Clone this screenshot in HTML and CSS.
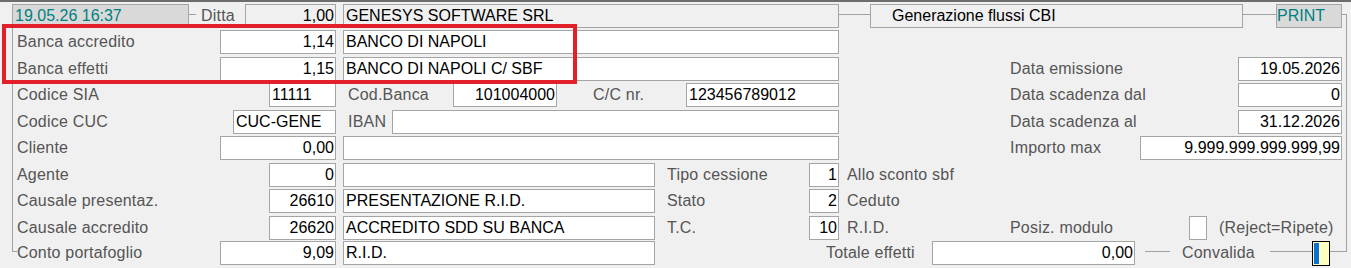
FILE: index.html
```html
<!DOCTYPE html>
<html lang="it">
<head>
<meta charset="utf-8">
<title>Generazione flussi CBI</title>
<link rel="stylesheet" href="styles.css">
</head>
<body>
<div class="screen">
  <div class="form">
    <div class="frame-left"></div>
    <div class="frame-right"></div>

    <div class="row r1">
      <div class="f stamp c-stamp">19.05.26 16:37</div>
      <div class="ditta c-ditta"><span class="wire w7"></span><span class="l">Ditta</span></div>
      <div class="f ro r c-dit">1,00</div>
      <div class="f ro c-long">GENESYS SOFTWARE SRL</div>
      <div class="wire c-link1"></div>
      <div class="f ro title c-title">Generazione flussi CBI</div>
      <div class="wire c-link2"></div>
      <div class="f print c-print">PRINT</div>
    </div>

    <div class="row r2">
      <div class="l c-lbl">Banca accredito</div>
      <div class="f r c-numw">1,14</div>
      <div class="f c-long">BANCO DI NAPOLI</div>
    </div>

    <div class="row r3">
      <div class="l c-lbl">Banca effetti</div>
      <div class="f r c-numw">1,15</div>
      <div class="f c-long">BANCO DI NAPOLI C/ SBF</div>
      <div class="l c-rlbl">Data emissione</div>
      <div class="f r c-date">19.05.2026</div>
    </div>

    <div class="row r4">
      <div class="l c-lbl">Codice SIA</div>
      <div class="f c-numn">11111</div>
      <div class="l c-mlbl">Cod.Banca</div>
      <div class="f r c-cb">101004000</div>
      <div class="l c-cclbl">C/C nr.</div>
      <div class="f c-cc">123456789012</div>
      <div class="l c-rlbl">Data scadenza dal</div>
      <div class="f r c-date">0</div>
    </div>

    <div class="row r5">
      <div class="l c-lbl">Codice CUC</div>
      <div class="f c-cuc">CUC-GENE</div>
      <div class="l c-mlbl">IBAN</div>
      <div class="f c-iban"></div>
      <div class="l c-rlbl">Data scadenza al</div>
      <div class="f r c-date">31.12.2026</div>
    </div>

    <div class="row r6">
      <div class="l c-lbl">Cliente</div>
      <div class="f r c-numw">0,00</div>
      <div class="f c-long"></div>
      <div class="l c-rlbl-s">Importo max</div>
      <div class="f r c-imp">9.999.999.999.999,99</div>
    </div>

    <div class="row r7">
      <div class="l c-lbl">Agente</div>
      <div class="f r c-numn">0</div>
      <div class="f c-short"></div>
      <div class="l c-tlbl">Tipo cessione</div>
      <div class="f r c-code">1</div>
      <div class="l c-desc">Allo sconto sbf</div>
    </div>

    <div class="row r8">
      <div class="l c-lbl">Causale presentaz.</div>
      <div class="f r c-numn">26610</div>
      <div class="f c-short">PRESENTAZIONE R.I.D.</div>
      <div class="l c-tlbl">Stato</div>
      <div class="f r c-code">2</div>
      <div class="l c-desc">Ceduto</div>
    </div>

    <div class="row r9">
      <div class="l c-lbl">Causale accredito</div>
      <div class="f r c-numn">26620</div>
      <div class="f c-short">ACCREDITO SDD SU BANCA</div>
      <div class="l c-tlbl">T.C.</div>
      <div class="f r c-code">10</div>
      <div class="l c-desc">R.I.D.</div>
      <div class="l c-rlbl-c">Posiz. modulo</div>
      <div class="f c-chk"></div>
      <div class="l c-rej">(Reject=Ripete)</div>
    </div>

    <div class="row r10">
      <div class="l c-lbl">Conto portafoglio</div>
      <div class="f r c-numw">9,09</div>
      <div class="f c-short">R.I.D.</div>
      <div class="l c-totl">Totale effetti</div>
      <div class="f r c-tot">0,00</div>
      <div class="confirm c-conv">
        <span class="wire w-a"></span>
        <span class="l conv-label">Convalida</span>
        <span class="wire w-b"></span>
        <span class="conv-icon"></span>
        <span class="wire w-c"></span>
      </div>
    </div>
  </div>
  <div class="mark"></div>
</div>
</body>
</html>
```

FILE: styles.css
```css
html, body {
  margin: 0;
  padding: 0;
  background: #f0f0f0;
}

body {
  font-family: "Liberation Sans", Arial, sans-serif;
  font-size: 16px;
}

.screen {
  position: relative;
  width: 1351px;
  height: 268px;
  box-sizing: border-box;
  border-top: 2px solid #6c6c6c;
  overflow: hidden;
}

.form {
  display: grid;
  padding-top: 2px;
  grid-template-columns:
    [a0] 12px [frm] 5px [lbl] 172px [dte] 31px [w] 13px [cuc] 12px [dit] 24px
    [n] 67px [ne] 7px [t] 5px [mid] 44px [ib] 61px [cb] 104px [cbe] 36px
    [cc] 62px [te2] 12px [tl] 19px [ccb] 123px [sb] 17px [tl2] 13px [se] 8px
    [al] 23px [gen] 62px [tot] 78px [rl] 125px [tote] 5px [imp] 49px [chk] 18px
    [chke] 12px [rej] 19px [db] 5px [gene] 33px [pr] 66px [pre] 5px [frme] 4px [end];
  grid-template-rows: 26px 27px 26px 27px 26px 27px 26px 27px 25px 26px;
}

.row { display: contents; }
.row > * { align-self: start; }
.r1 > * { grid-row: 1; }
.r2 > * { grid-row: 2; }
.r3 > * { grid-row: 3; }
.r4 > * { grid-row: 4; }
.r5 > * { grid-row: 5; }
.r6 > * { grid-row: 6; }
.r7 > * { grid-row: 7; }
.r8 > * { grid-row: 8; }
.r9 > * { grid-row: 9; }
.r10 > * { grid-row: 10; }

/* group box frame */
.frame-left {
  grid-column: frm / lbl;
  grid-row: 1 / 11;
  align-self: start;
  margin-top: 23px;
  height: 225px;
  box-sizing: border-box;
  border-left: 1px solid #a0a0a0;
  border-bottom: 1px solid #a0a0a0;
}

.frame-right {
  grid-column: pre / frme;
  grid-row: 1 / 11;
  align-self: start;
  margin-top: 10px;
  height: 238px;
  box-sizing: border-box;
  border-top: 1px solid #a0a0a0;
  border-right: 1px solid #a0a0a0;
}

.wire {
  display: block;
  height: 1px;
  margin-top: 10px;
  background: #a0a0a0;
}

/* fields */
.f {
  height: 24px;
  box-sizing: border-box;
  border: 1px solid #a5a5a5;
  background: #ffffff;
  color: #000;
  line-height: 22px;
  padding: 0 2px;
  white-space: nowrap;
  overflow: hidden;
}
.f.r { text-align: right; padding-right: 1px; }
.f.ro { background: #f0f0f0; }

.stamp {
  background: #d9d9d9;
  color: #008080;
  padding-left: 2px;
}
.print {
  background: #d9d9d9;
  color: #008080;
  padding-left: 0;
}
.title { padding-left: 21px; }

/* labels */
.l {
  display: block;
  height: 24px;
  line-height: 24px;
  color: #555555;
  white-space: nowrap;
  letter-spacing: 0.2px;
}

.ditta {
  display: flex;
  align-items: flex-start;
}
.w7 { width: 7px; flex: none; }
.ditta .l { margin-left: 5px; }

.confirm {
  display: flex;
  align-items: flex-start;
}
.w-a { width: 25px; margin-left: 10px; flex: none; }
.conv-label { margin-left: 12px; }
.w-b { flex: 1; margin-left: 15px; }
.conv-icon {
  flex: none;
  width: 18px;
  height: 25px;
  box-sizing: border-box;
  border: 1px solid #000;
  background: linear-gradient(#0a72d6, #0a72d6) 1px 1px / 5px 21px no-repeat, #ffffc2;
}
.w-c { flex: none; width: 17px; }

/* column placements */
.c-stamp  { grid-column: frm / dte; }
.c-ditta  { grid-column: dte / dit; }
.c-dit    { grid-column: dit / ne; }
.c-lbl    { grid-column: lbl / w; }
.c-numw   { grid-column: w / ne; }
.c-numn   { grid-column: n / ne; }
.c-cuc    { grid-column: cuc / ne; }
.c-long   { grid-column: t / se; }
.c-short  { grid-column: t / te2; }
.c-mlbl   { grid-column: mid / ib; }
.c-cb     { grid-column: cb / cbe; }
.c-cclbl  { grid-column: cc / ccb; }
.c-cc     { grid-column: ccb / se; }
.c-iban   { grid-column: ib / se; }
.c-tlbl   { grid-column: tl / sb; }
.c-code   { grid-column: sb / se; }
.c-desc   { grid-column: al / rl; }
.c-rlbl   { grid-column: rl / db; }
.c-rlbl-s { grid-column: rl / imp; }
.c-rlbl-c { grid-column: rl / chk; }
.c-date   { grid-column: db / pre; }
.c-imp    { grid-column: imp / pre; }
.c-chk    { grid-column: chk / chke; }
.c-rej    { grid-column: rej / frme; }
.c-totl   { grid-column: tl2 / tot; }
.c-tot    { grid-column: tot / tote; }
.c-conv   { grid-column: tote / frme; }
.c-link1  { grid-column: se / gen; }
.c-title  { grid-column: gen / gene; }
.c-link2  { grid-column: gene / pr; }
.c-print  { grid-column: pr / pre; }

/* red annotation drawn over the form */
.mark {
  position: absolute;
  left: 2px;
  top: 22px;
  width: 575px;
  height: 60px;
  box-sizing: border-box;
  border: 4px solid #e2202a;
  pointer-events: none;
}
```
